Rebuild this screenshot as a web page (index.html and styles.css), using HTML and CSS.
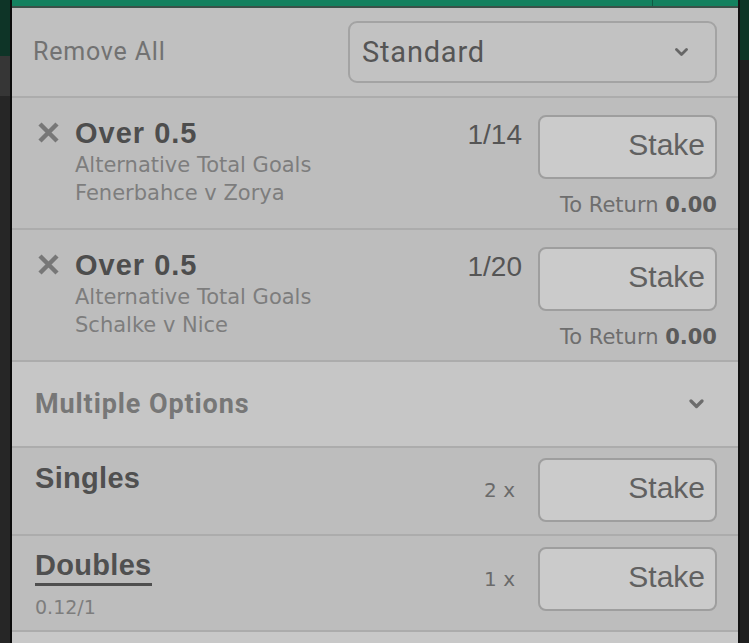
FILE: index.html
```html
<!DOCTYPE html>
<html lang="en">
<head>
    <meta charset="UTF-8">
    <meta name="viewport" content="width=device-width, initial-scale=1.0">
    <title>Bet Slip</title>
    <link rel="stylesheet" href="styles.css">
</head>
<body>
    <div class="screen">
        <div class="edge edge-left"></div>

        <main class="slip">
            <div class="slip-top"></div>

            <!-- Kepala slip: hapus semua + jenis taruhan -->
            <div class="slip-head">
                <span class="remove-all">Remove All</span>
                <div class="bet-type">
                    <span>Standard</span>
                    <svg class="chev" width="13" height="9" viewBox="0 0 13 9"><path d="M1.5 1.5 L6.5 6.5 L11.5 1.5"/></svg>
                </div>
            </div>

            <!-- Pilihan 1 -->
            <div class="bet">
                <svg class="bet-remove" width="23" height="22" viewBox="0 0 23 22"><path d="M3 2 L20 19 M20 2 L3 19"/></svg>
                <div class="bet-info">
                    <div class="bet-name">Over 0.5</div>
                    <div class="bet-market">Alternative Total Goals</div>
                    <div class="bet-market">Fenerbahce v Zorya</div>
                </div>
                <div class="bet-side">
                    <div class="stake-row">
                        <span class="bet-odds">1/14</span>
                        <div class="stake">Stake</div>
                    </div>
                    <div class="to-return">To Return <b>0.00</b></div>
                </div>
            </div>

            <!-- Pilihan 2 -->
            <div class="bet">
                <svg class="bet-remove" width="23" height="22" viewBox="0 0 23 22"><path d="M3 2 L20 19 M20 2 L3 19"/></svg>
                <div class="bet-info">
                    <div class="bet-name">Over 0.5</div>
                    <div class="bet-market">Alternative Total Goals</div>
                    <div class="bet-market">Schalke v Nice</div>
                </div>
                <div class="bet-side">
                    <div class="stake-row">
                        <span class="bet-odds">1/20</span>
                        <div class="stake">Stake</div>
                    </div>
                    <div class="to-return">To Return <b>0.00</b></div>
                </div>
            </div>

            <div class="multi-head">
                <span>Multiple Options</span>
                <svg class="chev" width="15" height="10" viewBox="0 0 15 10"><path d="M2 2 L7.5 7.5 L13 2"/></svg>
            </div>

            <div class="multi singles">
                <div class="multi-name">Singles</div>
                <div class="multi-side">
                    <span class="multi-count">2 x</span>
                    <div class="stake">Stake</div>
                </div>
            </div>

            <div class="multi doubles">
                <div>
                    <div class="multi-name"><span class="underlined">Doubles</span></div>
                    <div class="multi-odds">0.12/1</div>
                </div>
                <div class="multi-side">
                    <span class="multi-count">1 x</span>
                    <div class="stake">Stake</div>
                </div>
            </div>
        </main>

        <div class="edge edge-right"></div>
    </div>
</body>
</html>
```

FILE: styles.css
```css
body {
    margin: 0;
    background: #262626;
    font-family: "Liberation Sans", Arial, sans-serif;
}
.screen {
    display: flex;
    height: 643px;
    overflow: hidden;
}
.edge {
    width: 10px;
    flex: none;
}
.edge-left {
    border-right: 2px solid #0b0b0b;
    background: linear-gradient(#0e3427 0, #0e3427 56px, #363636 56px, #363636 96px, #262626 96px);
}
.edge-right {
    width: 9px;
    border-left: 2px solid #121212;
    background: linear-gradient(#0c3526 0, #0c3526 60px, #1f1f1f 60px);
}
.slip {
    flex: 1;
    background: #c8c8c8;
}
.slip-top {
    height: 6px;
    background: linear-gradient(90deg, #13815f 0, #13815f 640px, #0f5a43 640px, #0f5a43 641px, #13815f 641px);
    border-bottom: 2px solid #3b5149;
}

/* kepala */
.slip-head {
    height: 90px;
    box-sizing: border-box;
    display: flex;
    align-items: center;
    justify-content: space-between;
    padding: 0 21px 0 21px;
    background: #c0c0c0;
    border-bottom: 2px solid #acacac;
}
.remove-all {
    font-family: Roboto, sans-serif;
    font-size: 25px;
    line-height: 28px;
    letter-spacing: 0.8px;
    color: #727272;
}
.bet-type {
    width: 369px;
    height: 62px;
    box-sizing: border-box;
    border: 2px solid #a3a3a3;
    border-radius: 9px;
    background: #c2c2c2;
    display: flex;
    align-items: center;
    justify-content: space-between;
    padding: 0 27px 0 12px;
    font-family: Roboto, sans-serif;
    font-size: 29px;
    line-height: 32px;
    letter-spacing: 0.8px;
    color: #555;
}
.chev path {
    fill: none;
    stroke: #666;
    stroke-width: 2.8;
    stroke-linecap: round;
    stroke-linejoin: round;
}

/* pilihan taruhan */
.bet {
    height: 132px;
    box-sizing: border-box;
    display: flex;
    padding: 17px 21px 0 25px;
    background: #bdbdbd;
    border-bottom: 2px solid #acacac;
}
.bet-remove {
    flex: none;
    margin: 7px 15px 0 0;
}
.bet-remove path {
    stroke: #777;
    stroke-width: 4.5;
}
.bet-info {
    margin-top: 2px;
}
.bet-name {
    font-size: 29px;
    line-height: 32px;
    font-weight: bold;
    letter-spacing: 1px;
    color: #4d4d4d;
}
.bet-market {
    font-family: "DejaVu Sans", sans-serif;
    font-size: 21px;
    line-height: 28px;
    color: #7d7d7d;
}
.bet-market:nth-child(2) {
    margin-top: 2px;
}
.bet-side {
    margin-left: auto;
}
.stake-row {
    display: flex;
    align-items: flex-start;
    gap: 16px;
}
.bet-odds {
    margin-top: 4px;
    font-size: 28px;
    line-height: 32px;
    color: #555;
}
.stake {
    width: 179px;
    height: 64px;
    box-sizing: border-box;
    border: 2px solid #9e9e9e;
    border-radius: 8px;
    background: #cbcbcb;
    padding: 0 10px 4px 0;
    text-align: right;
    font-size: 30px;
    line-height: 56px;
    color: #616161;
}
.to-return {
    margin-top: 14px;
    text-align: right;
    font-family: "DejaVu Sans", sans-serif;
    font-size: 21px;
    line-height: 24px;
    color: #6e6e6e;
}
.to-return b {
    color: #5a5a5a;
}

/* taruhan ganda */
.multi-head {
    height: 86px;
    box-sizing: border-box;
    display: flex;
    align-items: center;
    justify-content: space-between;
    padding: 0 34px 0 23px;
    background: #c6c6c6;
    border-bottom: 2px solid #acacac;
    font-family: Roboto, sans-serif;
    font-weight: bold;
    font-size: 27px;
    line-height: 28px;
    letter-spacing: 0.9px;
    color: #777;
}
.multi-head .chev path {
    stroke: #6c6c6c;
    stroke-width: 3.2;
}
.multi {
    display: flex;
    align-items: flex-start;
    box-sizing: border-box;
    padding: 10px 21px 0 23px;
    background: #bdbdbd;
    border-bottom: 2px solid #acacac;
}
.singles {
    height: 88px;
}
.doubles {
    height: 96px;
    padding-top: 11px;
}
.multi-name {
    margin-top: 4px;
    font-size: 29px;
    line-height: 32px;
    font-weight: bold;
    letter-spacing: 0.3px;
    color: #505050;
}
.doubles .multi-name {
    margin-top: 2px;
}
.underlined {
    display: inline-block;
    padding-bottom: 2px;
    border-bottom: 3px solid #4f4f4f;
}
.multi-odds {
    margin-top: 10px;
    font-family: "DejaVu Sans", sans-serif;
    font-size: 19px;
    line-height: 22px;
    color: #7d7d7d;
}
.multi-side {
    margin-left: auto;
    display: flex;
    align-items: center;
    gap: 23px;
}
.multi-count {
    font-family: "DejaVu Sans", sans-serif;
    font-size: 20px;
    line-height: 24px;
    color: #6a6a6a;
}
```
